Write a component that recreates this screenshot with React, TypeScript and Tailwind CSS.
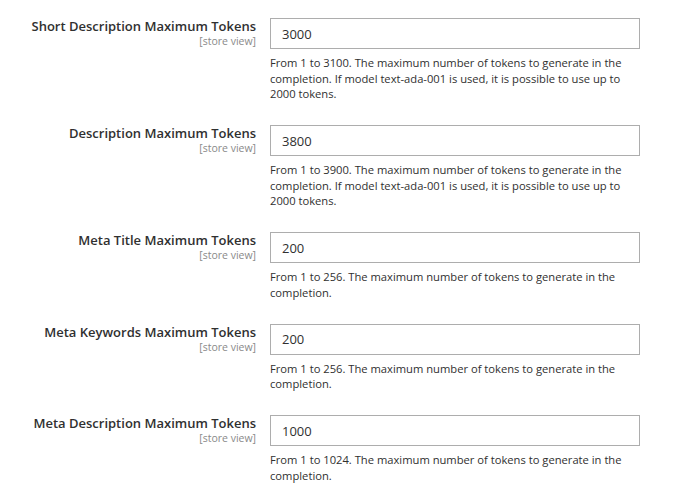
const FIELDS = [
  {
    label: 'Short Description Maximum Tokens',
    value: '3000',
    note: 'From 1 to 3100. The maximum number of tokens to generate in the completion. If model text-ada-001 is used, it is possible to use up to 2000 tokens.',
  },
  {
    label: 'Description Maximum Tokens',
    value: '3800',
    note: 'From 1 to 3900. The maximum number of tokens to generate in the completion. If model text-ada-001 is used, it is possible to use up to 2000 tokens.',
  },
  {
    label: 'Meta Title Maximum Tokens',
    value: '200',
    note: 'From 1 to 256. The maximum number of tokens to generate in the completion.',
  },
  {
    label: 'Meta Keywords Maximum Tokens',
    value: '200',
    note: 'From 1 to 256. The maximum number of tokens to generate in the completion.',
  },
  {
    label: 'Meta Description Maximum Tokens',
    value: '1000',
    note: 'From 1 to 1024. The maximum number of tokens to generate in the completion.',
  },
]

export default function App() {
  return (
    <div
      className="min-h-screen bg-white pt-[18px] text-[#303030]"
      style={{ fontFamily: '"Open Sans", "Liberation Sans", sans-serif' }}
    >
      {FIELDS.map((f) => (
        <div key={f.label} className="flex mb-[23.5px]">
          <div className="w-[256px] shrink-0 text-right">
            <div className="text-[13px] leading-[17px] font-semibold">{f.label}</div>
            <div className="text-[10.5px] leading-[13px] text-[#8a8a8a]">[store view]</div>
          </div>
          <div className="ml-[14px] w-[370px]">
            <input
              readOnly
              value={f.value}
              className="block w-full h-[31px] border border-[#adadad] px-[11px] text-[13px] text-[#303030] outline-none"
            />
            <div className="mt-[6px] pr-[2px] text-[11.2px] leading-[15.5px]">{f.note}</div>
          </div>
        </div>
      ))}
    </div>
  )
}
